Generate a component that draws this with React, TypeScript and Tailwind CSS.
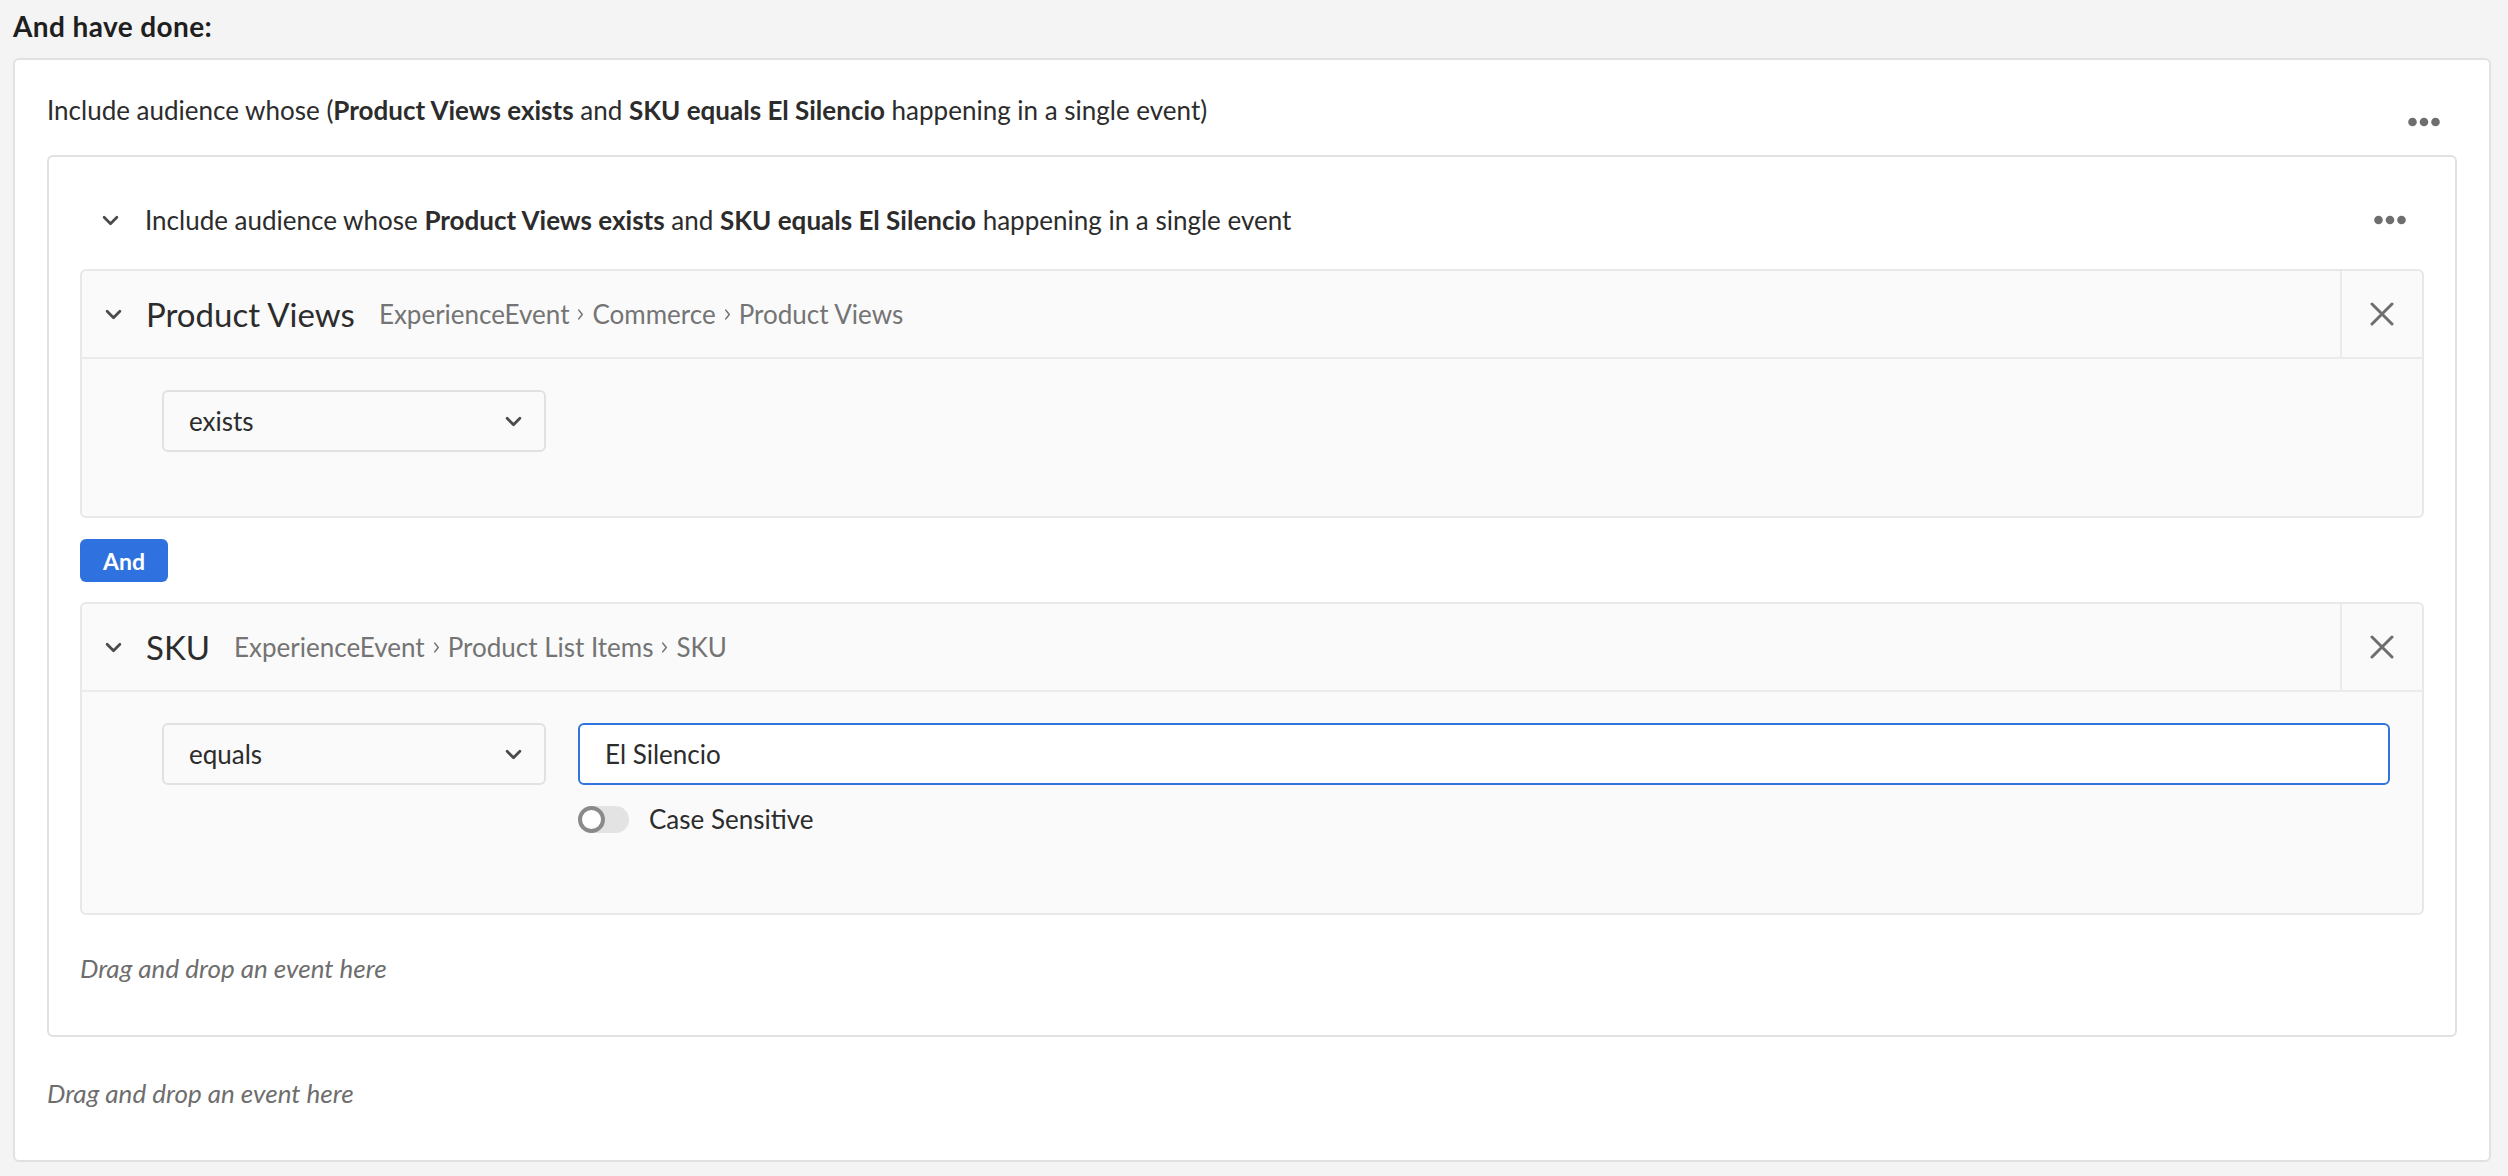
function Chevron({ className = "" }: { className?: string }) {
  return (
    <svg viewBox="0 0 16 10" className={className} fill="none">
      <path d="M2 2 L8 8 L14 2" stroke="#4b4b4b" strokeWidth="2.6" strokeLinecap="round" strokeLinejoin="round" />
    </svg>
  );
}

function Dots({ className = "" }: { className?: string }) {
  return (
    <svg viewBox="0 0 32 10" className={className}>
      <circle cx="4.5" cy="5" r="4.3" fill="#6e6e6e" />
      <circle cx="16" cy="5" r="4.3" fill="#6e6e6e" />
      <circle cx="27.5" cy="5" r="4.3" fill="#6e6e6e" />
    </svg>
  );
}

function CloseIcon() {
  return (
    <svg viewBox="0 0 24 24" className="w-[24px] h-[24px]" fill="none">
      <path d="M2 2 L22 22 M22 2 L2 22" stroke="#6e6e6e" strokeWidth="3" strokeLinecap="round" />
    </svg>
  );
}

function Crumbs({ items }: { items: string[] }) {
  return (
    <div className="ml-[24px] flex items-center gap-[8px] text-[26px] leading-[32px] text-[#747474]">
      {items.map((it, i) => (
        <span key={i} className="flex items-center gap-[8px]">
          {i > 0 && (
            <svg viewBox="0 0 8 14" className="w-[7px] h-[13px]" fill="none">
              <path d="M2 2 L6 7 L2 12" stroke="#747474" strokeWidth="1.8" strokeLinecap="round" strokeLinejoin="round" />
            </svg>
          )}
          {it}
        </span>
      ))}
    </div>
  );
}

function Select({ value }: { value: string }) {
  return (
    <div className="w-[384px] h-[62px] shrink-0 flex items-center justify-between pl-[25px] pr-[22px] rounded-[6px] border-2 border-[#e1e1e1] bg-[#fafafa] text-[26px] leading-[32px] text-[#2c2c2c]">
      <span>{value}</span>
      <Chevron className="w-[17px] h-[11px]" />
    </div>
  );
}

function ConditionCard({
  title,
  path,
  children,
  bodyClass,
}: {
  title: string;
  path: string[];
  children: React.ReactNode;
  bodyClass: string;
}) {
  return (
    <div className="rounded-[6px] border-2 border-[#e8e8e8] bg-[#fafafa]">
      <div className="flex h-[88px] border-b-2 border-[#ebebeb]">
        <div className="flex-1 flex items-center pl-[23px]">
          <Chevron className="w-[17px] h-[11px]" />
          <span className="ml-[24px] text-[33px] leading-[40px] text-[#2c2c2c]">{title}</span>
          <Crumbs items={path} />
        </div>
        <div className="w-[82px] border-l-2 border-[#ebebeb] flex items-center justify-center">
          <CloseIcon />
        </div>
      </div>
      <div className={bodyClass}>{children}</div>
    </div>
  );
}

export default function App() {
  return (
    <div className="min-h-screen bg-[#f4f4f4] font-[Lato,sans-serif] text-[#2c2c2c] pt-[12px] pb-[14px]">
      <div className="pl-[13px] text-[28px] font-bold leading-[28px] tracking-[0.4px] text-[#1f1f1f]">
        And have done:
      </div>

      <div className="ml-[13px] mr-[17px] mt-[18px] rounded-[6px] border-2 border-[#e1e1e1] bg-white px-[32px] pt-[34px] pb-[51px]">
        <div className="flex items-start justify-between">
          <p className="text-[26px] leading-[32px]">
            Include audience whose (<b>Product Views exists</b> and <b>SKU equals El Silencio</b> happening in a
            single event)
          </p>
          <div className="mt-[12px] h-[32px] mr-[17px] flex items-center">
            <Dots className="w-[32px] h-[10px]" />
          </div>
        </div>

        <div className="mt-[17px] rounded-[6px] border-2 border-[#e1e1e1] bg-white px-[31px] pt-[47px] pb-[51px]">
          <div className="flex items-center justify-between h-[32px] mb-[33px]">
            <div className="flex items-center pl-[22px]">
              <Chevron className="w-[17px] h-[11px]" />
              <p className="ml-[26px] text-[26px] leading-[32px]">
                Include audience whose <b>Product Views exists</b> and <b>SKU equals El Silencio</b> happening in a
                single event
              </p>
            </div>
            <Dots className="w-[32px] h-[10px] mr-[18px]" />
          </div>

          <ConditionCard
            title="Product Views"
            path={["ExperienceEvent", "Commerce", "Product Views"]}
            bodyClass="pl-[80px] pt-[31px] pb-[64px]"
          >
            <Select value="exists" />
          </ConditionCard>

          <button className="mt-[21px] h-[43px] w-[88px] rounded-[6px] bg-[#2f72df] text-white text-[23px] leading-[28px] font-bold">
            And
          </button>

          <div className="mt-[20px]">
            <ConditionCard
              title="SKU"
              path={["ExperienceEvent", "Product List Items", "SKU"]}
              bodyClass="pl-[80px] pr-[32px] pt-[31px] pb-[80px] flex gap-[32px]"
            >
              <Select value="equals" />
              <div className="flex-1">
                <div className="h-[62px] rounded-[6px] border-2 border-[#2f74df] bg-white flex items-center pl-[25px] text-[26px] leading-[32px]">
                  El Silencio
                </div>
                <div className="mt-[21px] h-[27px] flex items-center">
                  <div className="relative w-[51px] h-[27px] rounded-full bg-[#e3e3e3]">
                    <div className="absolute left-0 top-0 w-[27px] h-[27px] rounded-full border-[4px] border-[#8a8a8a] bg-white" />
                  </div>
                  <span className="ml-[20px] text-[26px] leading-[27px]">Case Sensitive</span>
                </div>
              </div>
            </ConditionCard>
          </div>

          <p className="mt-[37px] text-[26px] leading-[32px] italic text-[#6e6e6e]">Drag and drop an event here</p>
        </div>

        <p className="mt-[40px] text-[26px] leading-[32px] italic text-[#6e6e6e]">Drag and drop an event here</p>
      </div>
    </div>
  );
}
